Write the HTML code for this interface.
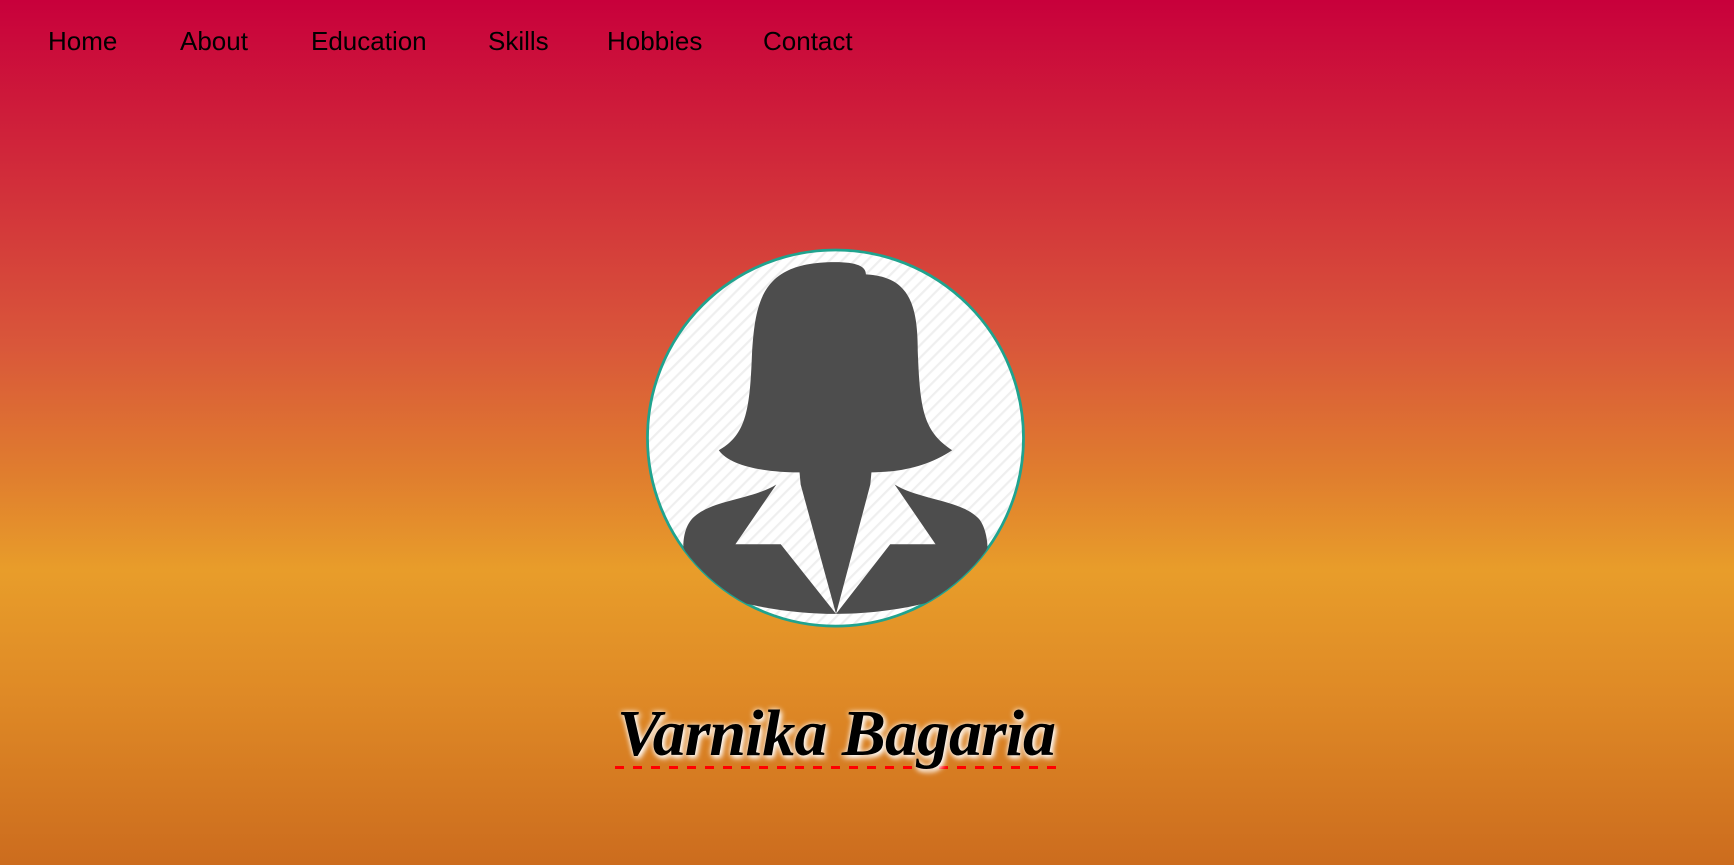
<!DOCTYPE html>
<html><head><meta charset="utf-8"><style>
html,body{margin:0;padding:0}
body{width:1734px;height:865px;overflow:hidden;position:relative;
background:linear-gradient(to bottom,#c8003b 0%,#d2303a 22%,#d9573a 40%,#e07e2e 55%,#e89d2a 66%,#df8a26 80%,#cc6c1e 100%);
font-family:"Liberation Sans",sans-serif}
nav a{position:absolute;top:26px;font-size:26px;color:#000;text-decoration:none;font-weight:normal}
.name{position:absolute;left:0;width:1672px;text-align:center;top:696px;font-family:"Liberation Serif",serif;font-style:italic;font-weight:bold;font-size:66px;color:#000;text-shadow:0 0 6px #fff,2px 3px 6px #fff;letter-spacing:-1px}
.name span{padding:0 2px 1px;line-height:68px;display:inline-block;
background:repeating-linear-gradient(to right,#f00 0 9px,transparent 9px 18px) bottom/100% 3px no-repeat}
</style></head><body>
<nav>
<a style="left:48px">Home</a><a style="left:180px">About</a><a style="left:311px">Education</a><a style="left:488px">Skills</a><a style="left:607px">Hobbies</a><a style="left:763px">Contact</a>
</nav>
<svg style="position:absolute;left:0;top:0" width="1734" height="865" viewBox="0 0 1568 782" preserveAspectRatio="none">
<defs>
<clipPath id="c"><circle cx="755.5" cy="396" r="170"/></clipPath>
<pattern id="p" width="8" height="8" patternUnits="userSpaceOnUse" patternTransform="rotate(45)"><rect width="8" height="8" fill="#fff"/><rect width="2" height="8" fill="#efefef"/></pattern>
</defs>
<circle cx="755.5" cy="396" r="170" fill="url(#p)" stroke="#20a38e" stroke-width="2.5"/>
<g clip-path="url(#c)" fill="#4d4d4d">
<path d="M755 237 C775 237 783 241 783 248 C825 250 830 280 830 320 C832 370 835 390 861 407 C840 421 815 427 788 427 L787 438 L756 555 L724 438 L723 427 C690 427 660 421 650 407 C675 393 678 370 680 320 C683 270 690 237 755 237 Z"/>
<path d="M702 438 C680 452 640 452 625 470 C617 480 618 495 618 495 L640 540 L672 545 C700 552 730 555 756 555 L706 492 L665 492 Z"/>
<path d="M809 438 C831 452 871 452 886 470 C893 480 893 495 893 495 L870 540 L838 545 C810 552 782 555 756 555 L805 492 L846 492 Z"/>
</g>
</svg>
<div class="name"><span>Varnika Bagaria</span></div>
</body></html>
